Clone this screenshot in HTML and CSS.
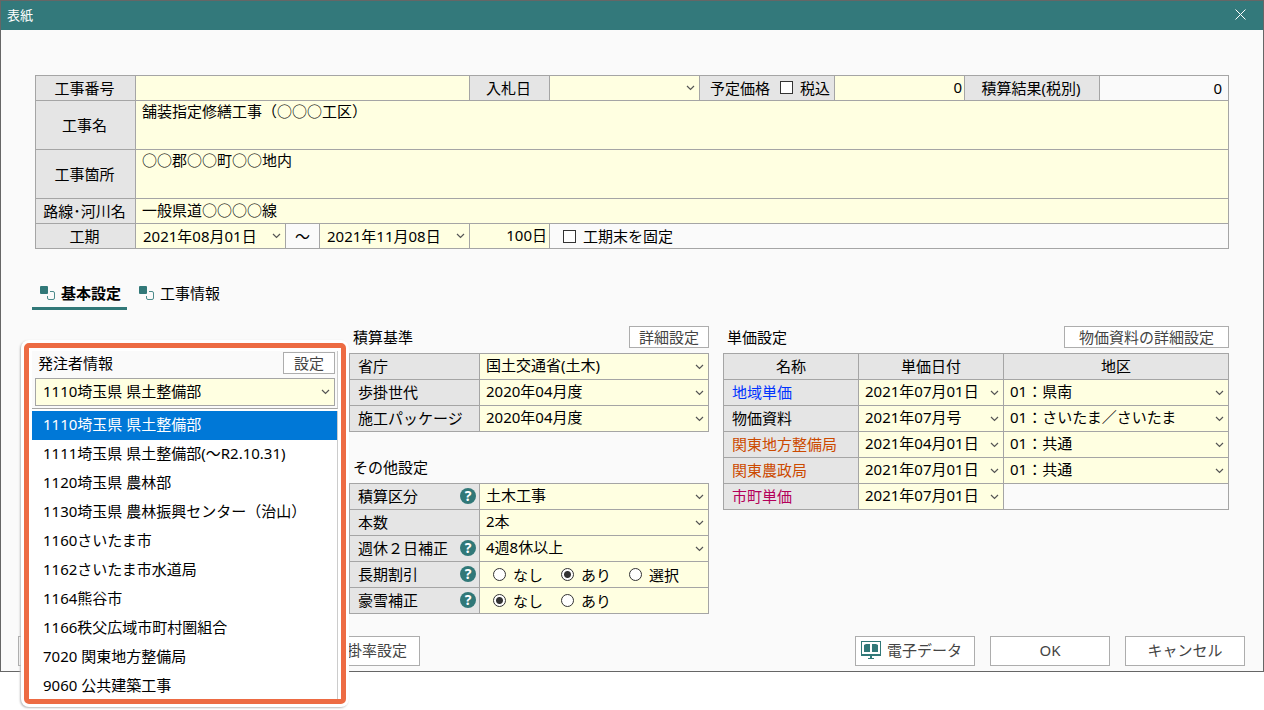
FILE: index.html
```html
<!DOCTYPE html>
<html lang="ja">
<head>
    <meta charset="UTF-8">
    <meta name="viewport" content="width=device-width, initial-scale=1.0">
    <title>表紙</title>
    <link rel="stylesheet" href="styles.css">
</head>
<body>
    <svg class="defs" aria-hidden="true">
        <symbol id="tabIcon" viewBox="0 0 15 14">
            <rect x="0" y="0" width="8" height="8" rx="1" fill="#317878"/>
            <path d="M10 5.500h3q1.500 0 1.500 1.500v5q0 1.500-1.500 1.500h-4q-1.500 0-1.500-1.500v-2" fill="none" stroke="#4c8b8b"/>
        </symbol>
    </svg>

    <div class="dialog">
        <header class="titlebar">
            <h1>表紙</h1>
            <button class="close" aria-label="閉じる">
                <svg width="11" height="11" viewBox="0 0 11 11"><path d="M.5.5l10 10M10.500.5l-10 10" stroke="#fff" fill="none"/></svg>
            </button>
        </header>

        <form class="cover">
            <label class="label" for="kojiNo">工事番号</label>
            <input class="field span-3" type="text" id="kojiNo">
            <label class="label" for="bidDate">入札日</label>
            <select class="field" id="bidDate"><option></option></select>
            <div class="label price">
                <label for="price">予定価格</label>
                <label class="check"><input type="checkbox">税込</label>
            </div>
            <input class="field number" type="text" id="price" value="0">
            <label class="label" for="result">積算結果(税別)</label>
            <output class="plain number" id="result">0</output>

            <label class="label" for="kojiName">工事名</label>
            <textarea class="field span-rest" id="kojiName">舗装指定修繕工事（○○○工区）</textarea>

            <label class="label" for="kojiPlace">工事箇所</label>
            <textarea class="field span-rest" id="kojiPlace">○○郡○○町○○地内</textarea>

            <label class="label" for="route">路線･河川名</label>
            <input class="field span-rest" type="text" id="route" value="一般県道○○○○線">

            <label class="label" for="dateFrom">工期</label>
            <select class="field period" id="dateFrom"><option>2021年08月01日</option></select>
            <span class="plain tilde">～</span>
            <select class="field period" id="dateTo" aria-label="工期末"><option>2021年11月08日</option></select>
            <input class="field number" type="text" value="100日" aria-label="日数">
            <div class="plain span-end">
                <label class="check"><input type="checkbox">工期末を固定</label>
            </div>
        </form>

        <nav class="tabs">
            <a class="tab active" href="#basic"><svg width="15" height="14"><use href="#tabIcon"/></svg>基本設定</a>
            <a class="tab" href="#info"><svg width="15" height="14"><use href="#tabIcon"/></svg>工事情報</a>
        </nav>

        <main class="columns" id="basic">
            <section class="owner">
                <div class="callout">
                    <div class="owner-panel">
                        <div class="owner-head">
                            <label for="owner">発注者情報</label>
                            <button class="btn small">設定</button>
                        </div>
                        <select class="field owner-select" id="owner"><option>1110埼玉県 県土整備部</option></select>
                    </div>
                    <ul class="options" role="listbox" aria-label="発注者情報">
                        <li role="option" aria-selected="true">1110埼玉県 県土整備部</li>
                        <li role="option">1111埼玉県 県土整備部(～R2.10.31)</li>
                        <li role="option">1120埼玉県 農林部</li>
                        <li role="option">1130埼玉県 農林振興センター（治山）</li>
                        <li role="option">1160さいたま市</li>
                        <li role="option">1162さいたま市水道局</li>
                        <li role="option">1164熊谷市</li>
                        <li role="option">1166秩父広域市町村圏組合</li>
                        <li role="option">7020 関東地方整備局</li>
                        <li role="option">9060 公共建築工事</li>
                    </ul>
                </div>
            </section>

            <section>
                <div class="section-head">
                    <h2>積算基準</h2>
                    <button class="btn small">詳細設定</button>
                </div>
                <div class="settings">
                    <label class="name" for="ministry">省庁</label>
                    <select class="field" id="ministry"><option>国土交通省(土木)</option></select>
                    <label class="name" for="generation">歩掛世代</label>
                    <select class="field" id="generation"><option>2020年04月度</option></select>
                    <label class="name" for="package">施工パッケージ</label>
                    <select class="field" id="package"><option>2020年04月度</option></select>
                </div>

                <div class="section-head other">
                    <h2>その他設定</h2>
                </div>
                <div class="settings">
                    <div class="name"><label for="kubun">積算区分</label><button class="help">?</button></div>
                    <select class="field" id="kubun"><option>土木工事</option></select>
                    <label class="name" for="count">本数</label>
                    <select class="field" id="count"><option>2本</option></select>
                    <div class="name"><label for="holiday">週休２日補正</label><button class="help">?</button></div>
                    <select class="field" id="holiday"><option>4週8休以上</option></select>
                    <div class="name"><span>長期割引</span><button class="help">?</button></div>
                    <div class="field radios">
                        <label class="check"><input type="radio" name="longTerm">なし</label>
                        <label class="check"><input type="radio" name="longTerm" checked>あり</label>
                        <label class="check"><input type="radio" name="longTerm">選択</label>
                    </div>
                    <div class="name"><span>豪雪補正</span><button class="help">?</button></div>
                    <div class="field radios">
                        <label class="check"><input type="radio" name="snow" checked>なし</label>
                        <label class="check"><input type="radio" name="snow">あり</label>
                    </div>
                </div>
            </section>

            <section>
                <div class="section-head">
                    <h2>単価設定</h2>
                    <button class="btn small wide">物価資料の詳細設定</button>
                </div>
                <table class="prices">
                    <thead>
                        <tr><th class="col-name">名称</th><th class="col-date">単価日付</th><th>地区</th></tr>
                    </thead>
                    <tbody>
                        <tr>
                            <th class="blue">地域単価</th>
                            <td><select class="field" aria-label="地域単価 単価日付"><option>2021年07月01日</option></select></td>
                            <td><select class="field" aria-label="地域単価 地区"><option>01：県南</option></select></td>
                        </tr>
                        <tr>
                            <th>物価資料</th>
                            <td><select class="field" aria-label="物価資料 単価日付"><option>2021年07月号</option></select></td>
                            <td><select class="field" aria-label="物価資料 地区"><option>01：さいたま／さいたま</option></select></td>
                        </tr>
                        <tr>
                            <th class="orange">関東地方整備局</th>
                            <td><select class="field" aria-label="関東地方整備局 単価日付"><option>2021年04月01日</option></select></td>
                            <td><select class="field" aria-label="関東地方整備局 地区"><option>01：共通</option></select></td>
                        </tr>
                        <tr>
                            <th class="orange">関東農政局</th>
                            <td><select class="field" aria-label="関東農政局 単価日付"><option>2021年07月01日</option></select></td>
                            <td><select class="field" aria-label="関東農政局 地区"><option>01：共通</option></select></td>
                        </tr>
                        <tr>
                            <th class="pink">市町単価</th>
                            <td><select class="field" aria-label="市町単価 単価日付"><option>2021年07月01日</option></select></td>
                            <td></td>
                        </tr>
                    </tbody>
                </table>
            </section>
        </main>

        <footer class="footer">
            <span class="btn"></span>
            <button class="btn rate">掛率設定</button>
            <button class="btn push">
                <svg width="20" height="18" viewBox="0 0 20 18" fill="#317878">
                    <path fill-rule="evenodd" d="M0 0h20v15H0zM1 1v12h18V1z"/>
                    <path d="M3 4l2-1h4v8H3zM11 3h4l2 1v7h-6zM9 15h2v2h2v1H7v-1h2z"/>
                </svg>
                電子データ
            </button>
            <button class="btn">OK</button>
            <button class="btn">キャンセル</button>
        </footer>
    </div>
</body>
</html>
```
FILE: styles.css
```css
* {
    box-sizing: border-box;
}
body {
    min-height: 100vh;
    margin: 0;
    background-color: #fff;
    color: #000;
    font-family: "Noto Sans", "Noto Sans CJK JP", sans-serif;
    font-size: 15px;
    line-height: 22px;
}
input, select, textarea, button {
    margin: 0;
    font: inherit;
    color: inherit;
}
h1, h2 {
    margin: 0;
    font-size: 15px;
    font-weight: normal;
}
.defs {
    display: none;
}
.dialog {
    border: 1px solid #666;
    background-color: #fafafa;
}

/* title bar */
.titlebar {
    display: flex;
    justify-content: space-between;
    align-items: center;
    height: 29px;
    padding: 0 17px 2px 6px;
    background-color: #33797b;
    color: #fff;
}
.titlebar h1 {
    font-size: 13px;
}
.close {
    display: flex;
    padding: 0;
    border: none;
    background: none;
}

/* fields */
.field {
    width: 100%;
    min-width: 0;
    padding: 0 6px 3px;
    border: none;
    border-radius: 0;
    outline: none;
    background-color: #ffffe1;
}
select.field {
    appearance: none;
    background-image: url("data:image/svg+xml,%3Csvg xmlns='http://www.w3.org/2000/svg' width='9' height='6'%3E%3Cpath d='M1 1L4.500 4.500L8 1' fill='none' stroke='%23555' stroke-width='1.2'/%3E%3C/svg%3E");
    background-repeat: no-repeat;
    background-position: right 4px center;
}
textarea.field {
    display: block;
    line-height: 21px;
    resize: none;
}
.field.period {
    padding: 0 7px;
}
.number {
    text-align: right;
}
input.number {
    padding-right: 2px;
}
.check {
    display: flex;
    align-items: center;
    gap: 7px;
}
input[type="checkbox"], input[type="radio"] {
    appearance: none;
    flex: none;
    width: 13px;
    height: 13px;
    border: 1px solid #333;
    background-color: #fff;
}
input[type="radio"] {
    border-radius: 50%;
}
input[type="radio"]:checked {
    background-image: radial-gradient(circle, #333 0 3px, #fff 4px);
}

/* cover form */
.cover {
    display: grid;
    grid-template-columns: 99px 149px 33px 149px 79px 149px 134px 129px 134px 1fr;
    grid-template-rows: 24px 48px 48px 24px 24px;
    gap: 1px;
    margin: 45px 34px 0;
    border: 1px solid #a5a5a5;
    background-color: #a5a5a5;
}
.label {
    display: flex;
    justify-content: center;
    align-items: center;
    padding: 0 2px 1px 0;
    background-color: #e5e5e5;
    white-space: nowrap;
}
.price {
    gap: 10px;
    padding-left: 8px;
}
.plain {
    display: flex;
    align-items: center;
    padding: 0 6px;
    background-color: #fafafa;
}
.plain.number {
    justify-content: flex-end;
}
.tilde {
    justify-content: center;
}
.span-3 {
    grid-column: span 3;
}
.span-rest {
    grid-column: 2 / -1;
}
.span-end {
    grid-column: 6 / -1;
    padding-left: 13px;
}

/* tabs */
.tabs {
    display: flex;
    gap: 4px;
    margin: 32px 31px 0;
}
.tab {
    display: flex;
    align-items: center;
    gap: 6px;
    height: 29px;
    padding: 0 6px 5px 8px;
    color: #000;
    text-decoration: none;
}
.tab.active {
    padding-bottom: 2px;
    border-bottom: 3px solid #317878;
    font-weight: bold;
}

/* settings */
.columns {
    display: grid;
    grid-template-columns: 300px 360px 1fr;
    gap: 14px;
    margin: 14px 34px 0;
}
.section-head {
    display: flex;
    justify-content: space-between;
    align-items: center;
    height: 29px;
    padding: 0 0 3px 4px;
}
.other {
    margin-top: 22px;
}
.settings {
    display: grid;
    grid-template-columns: 129px 1fr;
    grid-auto-rows: 25px;
    gap: 1px;
    border: 1px solid #a5a5a5;
    background-color: #a5a5a5;
}
.name {
    display: flex;
    justify-content: space-between;
    align-items: center;
    padding: 0 3px 2px 8px;
    background-color: #e5e5e5;
}
.help {
    width: 16px;
    height: 16px;
    padding: 0;
    border: none;
    border-radius: 50%;
    background-color: #317878;
    color: #fff;
    font-size: 14px;
    font-weight: bold;
    line-height: 16px;
}
.radios {
    display: flex;
    align-items: center;
    gap: 18px;
    padding: 0 6px 0 13px;
}
.prices {
    width: 100%;
    border-collapse: collapse;
    table-layout: fixed;
}
.prices th, .prices td {
    height: 26px;
    padding: 0;
    border: 1px solid #a5a5a5;
}
.prices th {
    padding-bottom: 2px;
    background-color: #e5e5e5;
    font-weight: normal;
}
.prices tbody th {
    padding-left: 8px;
    text-align: left;
}
.prices .field {
    display: block;
    height: 25px;
}
.col-name {
    width: 135px;
}
.col-date {
    width: 145px;
}
.blue {
    color: #0033ff;
}
.orange {
    color: #cc4a00;
}
.pink {
    color: #b4005a;
}

/* buttons */
.btn {
    display: flex;
    justify-content: center;
    align-items: center;
    gap: 6px;
    width: 120px;
    height: 30px;
    padding: 0 0 3px;
    border: 1px solid #adadad;
    background-color: #fff;
    color: #444;
    white-space: nowrap;
}
.small {
    width: auto;
    height: 22px;
    padding: 0 9px 1px;
}
.wide {
    padding: 0 14px 1px;
}
.footer {
    display: flex;
    gap: 15px;
    margin-top: 22px;
    padding: 0 18px 5px 17px;
}
.rate {
    justify-content: flex-end;
    margin-left: 147px;
    padding-right: 12px;
}
.push {
    justify-content: flex-start;
    margin-left: auto;
    padding-left: 5px;
}

/* owner list, lies over the dialog */
.owner {
    position: relative;
}
.callout {
    position: absolute;
    top: 19px;
    left: -11px;
    z-index: 1;
    width: 322px;
    height: 361px;
    padding: 3px 3px 0;
    border: 5px solid #ed6b43;
    border-radius: 5px;
    background-color: #fff;
    box-shadow: 0 0 0 3px #fff, -1px 1px 2px 3px #bbb;
    overflow: hidden;
}
.owner-panel {
    padding: 1px 2px 2px 3px;
    border-right: 1px solid #ccc;
    border-bottom: 1px solid #a5a5a5;
    background-color: #fafafa;
}
.owner-head {
    display: flex;
    justify-content: space-between;
    align-items: center;
    padding: 0 0 4px 3px;
    line-height: 20px;
}
.owner-head .small {
    padding: 0 10px 1px;
}
.owner-select {
    height: 28px;
    padding-left: 7px;
    border: 1px solid #a5a5a5;
}
.options {
    margin: 2px 0 0;
    padding: 0;
    border-right: 1px solid #ccc;
    list-style-type: none;
}
.options li {
    height: 29px;
    padding-left: 11px;
    line-height: 27px;
    white-space: nowrap;
}
.options li[aria-selected="true"] {
    background-color: #0078d7;
    color: #fff;
}
```
